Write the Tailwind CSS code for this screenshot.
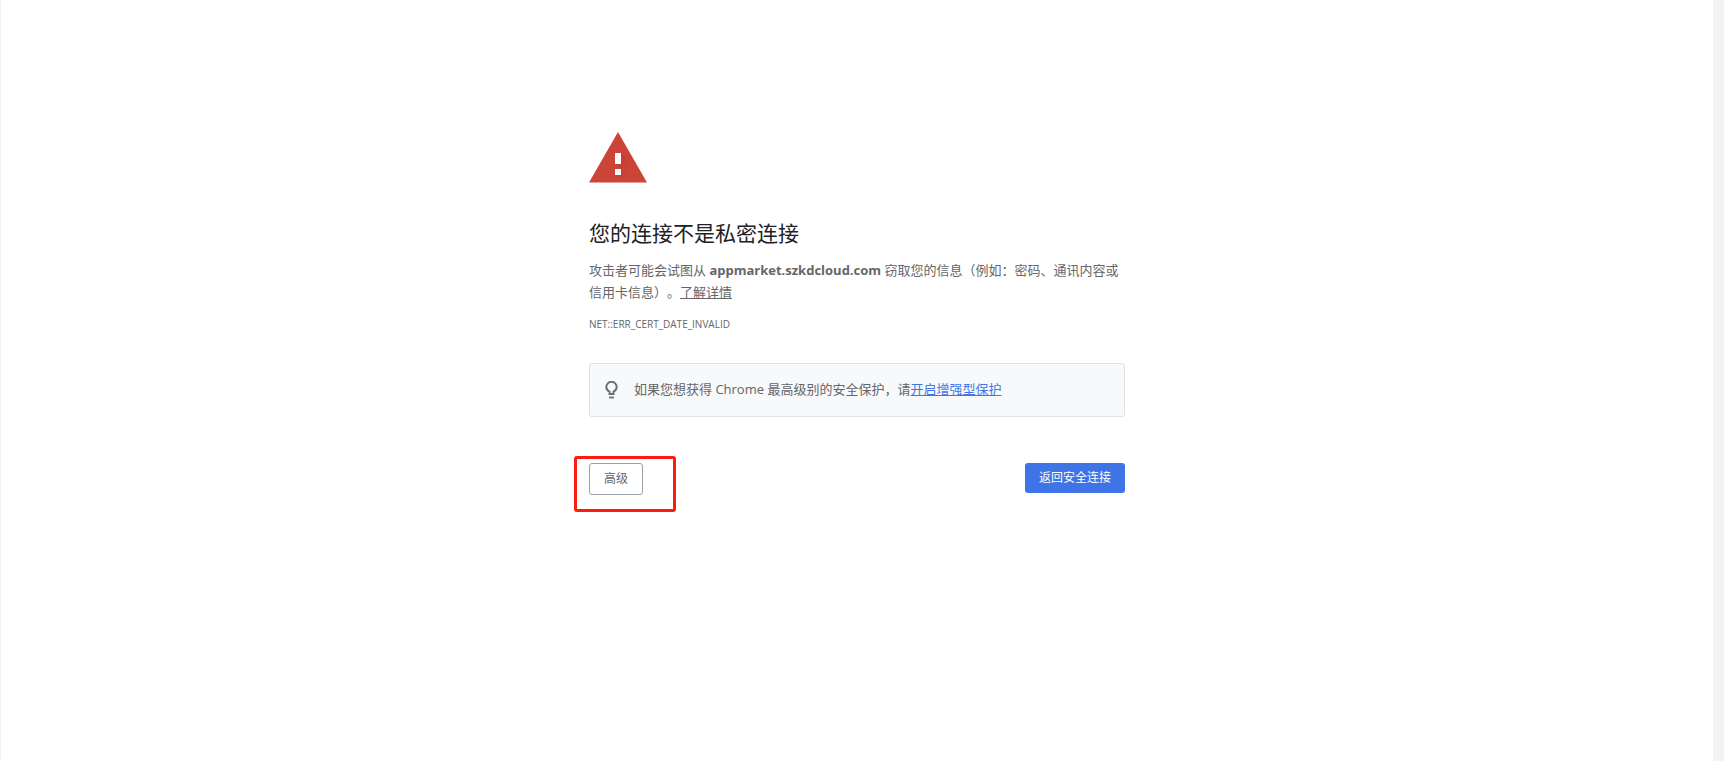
<!DOCTYPE html>
<html lang="zh-CN">
<head>
  <meta charset="UTF-8" />
  <meta name="viewport" content="width=device-width, initial-scale=1.0"/>
  <title>隐私设置错误</title>
  <script src="https://cdn.jsdelivr.net/npm/@tailwindcss/browser@4"></script>
</head>
<body class="flex min-h-screen border-l border-[#f1f1f1] bg-white font-['Open_Sans','Noto_Sans_CJK_SC',sans-serif] text-[13px] text-[#646669] [text-spacing-trim:space-all]">

  <main class="flex-1 pt-[132px]">
    <div class="mx-auto w-full max-w-[536px]">
      <!-- Warning icon -->
      <svg class="h-[51px] w-[58px]" viewBox="0 0 58 51" aria-hidden="true">
        <defs>
          <linearGradient id="shade" x1="0" y1="0" x2="1" y2="1">
            <stop offset="0" stop-color="#a93428" stop-opacity=".7"/>
            <stop offset="1" stop-color="#cc4437" stop-opacity="0"/>
          </linearGradient>
        </defs>
        <path d="M29 0 58 50.500H0z" fill="#cc4437"/>
        <path d="M32 21 44 33v10H38l-6-6-6-6v1h6z" fill="url(#shade)"/>
        <path d="M32 37 40 45v5H34l-8-7h6z" fill="url(#shade)"/>
        <path d="M26 21h6v11h-6zM26 37h6v6h-6z" fill="#fff"/>
      </svg>

      <h1 class="mt-8 text-[21px] leading-9 text-[#202124]">您的连接不是私密连接</h1>

      <p class="mt-2 leading-[22px]">
        攻击者可能会试图从 <strong class="font-bold">appmarket.szkdcloud.com</strong> 窃取您的信息（例如：密码、通讯内容或信用卡信息）。<a href="#" class="underline">了解详情</a>
      </p>
      <p class="mt-3 text-[10px] leading-[18px]">NET::ERR_CERT_DATE_INVALID</p>

      <!-- Enhanced protection hint -->
      <div class="mt-[30px] flex h-[54px] items-center rounded-[3px] border border-[#dfe1e5] bg-[#f8f9fb] pl-[15px]">
        <svg class="mr-4 h-[18px] w-[13px]" viewBox="0 0 13 18" fill="none" stroke="#6b6d70" aria-hidden="true">
          <path d="M4.500 13v-2.300C2.600 9.700 1.300 8.300 1.300 6a5.200 5.200 0 0 1 10.400 0c0 2.300-1.300 3.700-3.200 4.700V13z" stroke-width="1.900"/>
          <path d="M4 16.500h5" stroke-width="1.800"/>
        </svg>
        <p>如果您想获得 Chrome 最高级别的安全保护，请<a href="#" class="text-[#4375e8] underline">开启增强型保护</a></p>
      </div>

      <div class="mt-[46px] flex items-start justify-between">
        <div class="relative">
          <button type="button" class="h-8 rounded-[3px] border border-[#9aa0a6] px-[14px] text-xs">高级</button>
          <span class="pointer-events-none absolute -top-[7px] -left-[15px] h-14 w-[102px] rounded-[3px] border-3 border-[#ff1a10]"></span>
        </div>
        <button type="button" class="h-[30px] rounded-[3px] bg-[#3e74e6] px-[14px] text-xs text-white">返回安全连接</button>
      </div>
    </div>
  </main>

  <!-- Scrollbar gutter -->
  <div class="w-[11px] bg-[#f3f3f3]"></div>

</body>
</html>
